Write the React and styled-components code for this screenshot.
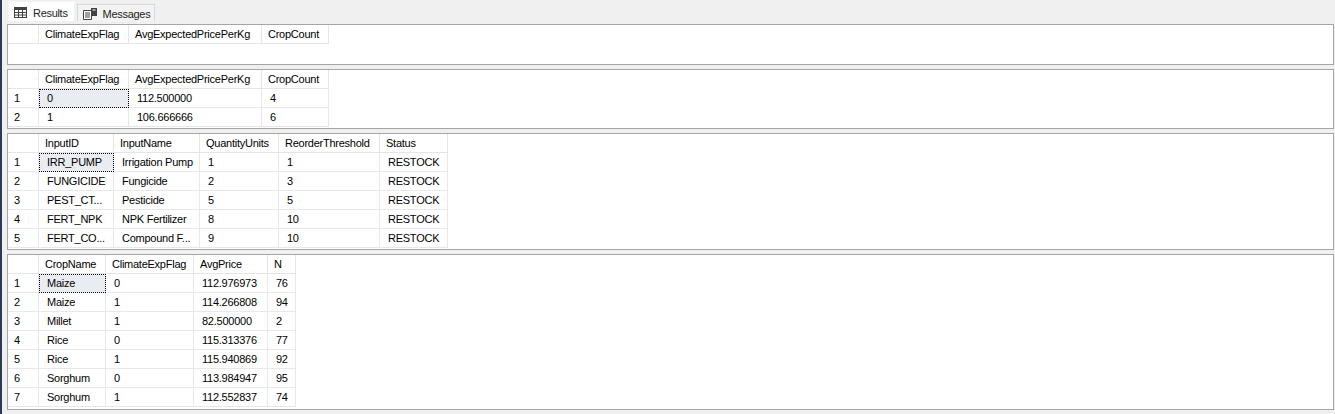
import React from "react";
import styled, { createGlobalStyle } from "styled-components";

const Global = createGlobalStyle`
  html, body { margin: 0; padding: 0; }
  body {
    background: #f0f0f0;
    font-family: "Liberation Sans", Arial, sans-serif;
    font-size: 11px;
    color: #000;
  }
`;

const Window = styled.div`
  display: flex;
  width: 1335px;
  height: 414px;
  overflow: hidden;
  background: #f0f0f0;
`;

const LeftEdge = styled.div`
  width: 2px;
  flex: none;
  background: #2b3a57;
`;

const Main = styled.div`
  flex: 1;
  display: flex;
  flex-direction: column;
`;

const TabStrip = styled.div`
  height: 21px;
  display: flex;
  align-items: flex-end;
  gap: 2px;
  padding-left: 6px;
  box-sizing: border-box;
`;

const Tab = styled.div`
  display: flex;
  align-items: center;
  gap: 6px;
  box-sizing: border-box;
  height: ${(p) => (p.$active ? "20px" : "17px")};
  padding: 2px ${(p) => (p.$active ? "6px" : "4px")} 0 5px;
  background: ${(p) => (p.$active ? "#ffffff" : "#f3f3f3")};
  border: 1px solid ${(p) => (p.$active ? "#f4f4f4" : "#d9d9d9")};
  border-bottom: none;
  font-size: 11px;
  letter-spacing: -0.3px;
  color: #1e1e1e;
`;

const Results = styled.div`
  display: flex;
  flex-direction: column;
  gap: 4px;
  padding: 3px 1px 0 5px;
`;

const Panel = styled.div`
  box-sizing: border-box;
  height: ${(p) => p.$h}px;
  background: #ffffff;
  border: 1px solid #a5a5a5;
  overflow: hidden;
`;

const Row = styled.div`
  display: grid;
  grid-template-columns: ${(p) => p.$cols};
  width: max-content;
  height: 19px;
`;

const HeadCell = styled.div`
  box-sizing: border-box;
  height: 19px;
  line-height: 19px;
  padding-left: 6px;
  border-right: 1px solid #e5e5e5;
  border-bottom: 1px solid #e5e5e5;
  white-space: nowrap;
  overflow: hidden;
  letter-spacing: -0.25px;
`;

const Cell = styled.div`
  box-sizing: border-box;
  height: 19px;
  line-height: 19px;
  padding-left: ${(p) => (p.$num ? "6px" : "8px")};
  border-right: 1px solid #e8e8e8;
  border-bottom: 1px solid #e8e8e8;
  white-space: nowrap;
  overflow: hidden;
  letter-spacing: -0.25px;
  background: ${(p) => (p.$sel ? "#e9edf1" : "#ffffff")};
  outline: ${(p) => (p.$sel ? "1px dotted #000" : "none")};
  outline-offset: -1px;
`;

const GridIcon = () => (
  <svg width="13" height="11" viewBox="0 0 13 11">
    <rect x="0.5" y="0.5" width="12" height="10" fill="#fff" stroke="#424242" />
    <rect x="0.5" y="0.5" width="12" height="2.5" fill="#424242" />
    <path d="M4.5 3v7.5M8.5 3v7.5M1 5.5h11.5M1 8h11.5" stroke="#424242" strokeWidth="1" />
  </svg>
);

const MsgIcon = () => (
  <svg width="14" height="12" viewBox="0 0 14 12">
    <path d="M0.5 2.5h8v9h-8z" fill="#fff" stroke="#424242" />
    <path d="M2 5h5M2 7h5M2 9h5" stroke="#424242" />
    <rect x="8" y="0" width="6" height="8" fill="#424242" />
    <rect x="9.5" y="1.5" width="3" height="1" fill="#fff" />
  </svg>
);

const grids = [
  {
    h: 41,
    cols: "31px 90px 133px 67px",
    head: ["ClimateExpFlag", "AvgExpectedPricePerKg", "CropCount"],
    rows: [],
  },
  {
    h: 60,
    cols: "31px 90px 133px 67px",
    head: ["ClimateExpFlag", "AvgExpectedPricePerKg", "CropCount"],
    rows: [
      ["0", "112.500000", "4"],
      ["1", "106.666666", "6"],
    ],
  },
  {
    h: 117,
    cols: "31px 75px 86px 79px 101px 68px",
    head: ["InputID", "InputName", "QuantityUnits", "ReorderThreshold", "Status"],
    rows: [
      ["IRR_PUMP", "Irrigation Pump", "1", "1", "RESTOCK"],
      ["FUNGICIDE", "Fungicide", "2", "3", "RESTOCK"],
      ["PEST_CT...", "Pesticide", "5", "5", "RESTOCK"],
      ["FERT_NPK", "NPK Fertilizer", "8", "10", "RESTOCK"],
      ["FERT_CO...", "Compound F...", "9", "10", "RESTOCK"],
    ],
  },
  {
    h: 156,
    cols: "31px 67px 88px 74px 28px",
    head: ["CropName", "ClimateExpFlag", "AvgPrice", "N"],
    rows: [
      ["Maize", "0", "112.976973", "76"],
      ["Maize", "1", "114.266808", "94"],
      ["Millet", "1", "82.500000", "2"],
      ["Rice", "0", "115.313376", "77"],
      ["Rice", "1", "115.940869", "92"],
      ["Sorghum", "0", "113.984947", "95"],
      ["Sorghum", "1", "112.552837", "74"],
    ],
  },
];

export default function App() {
  return (
    <>
      <Global />
      <Window>
        <LeftEdge />
        <Main>
          <TabStrip>
            <Tab $active>
              <GridIcon />
              <span>Results</span>
            </Tab>
            <Tab>
              <MsgIcon />
              <span>Messages</span>
            </Tab>
          </TabStrip>
          <Results>
            {grids.map((g, gi) => (
              <Panel key={gi} $h={g.h}>
                <Row $cols={g.cols}>
                  <HeadCell />
                  {g.head.map((h) => (
                    <HeadCell key={h}>{h}</HeadCell>
                  ))}
                </Row>
                {g.rows.map((r, ri) => (
                  <Row key={ri} $cols={g.cols}>
                    <Cell $num>{ri + 1}</Cell>
                    {r.map((v, ci) => (
                      <Cell key={ci} $sel={ri === 0 && ci === 0}>
                        {v}
                      </Cell>
                    ))}
                  </Row>
                ))}
              </Panel>
            ))}
          </Results>
        </Main>
      </Window>
    </>
  );
}
